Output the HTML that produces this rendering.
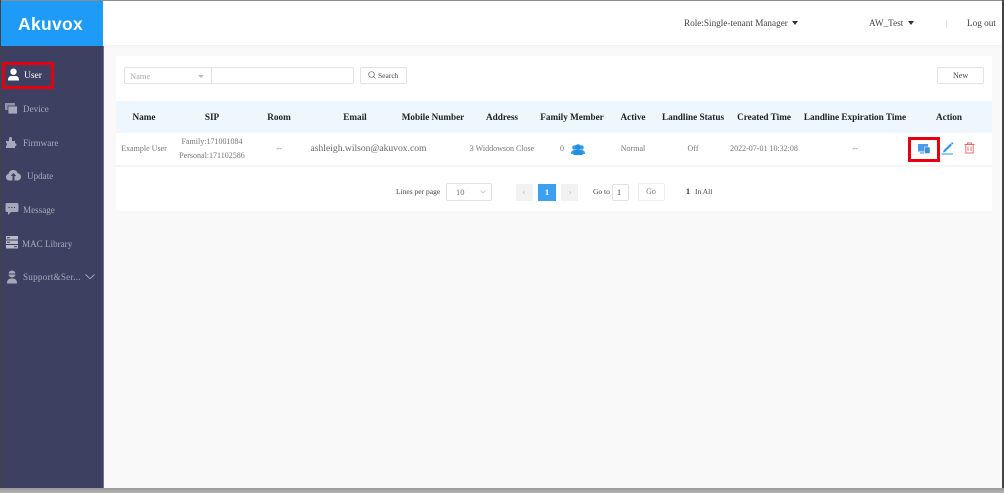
<!DOCTYPE html>
<html><head><meta charset="utf-8">
<style>
html,body{margin:0;padding:0;width:1004px;height:493px;overflow:hidden;background:#f9f9f9;}
body{position:relative;font-family:"Liberation Serif",serif;color:#555;}
div,span,svg{position:absolute;}
#w{left:0;top:0;width:1004px;height:493px;filter:blur(.3px);}
.t{white-space:nowrap;line-height:12px;}
.c{transform:translateX(-50%);}
.h{top:111px;font-size:9.200px;font-weight:bold;color:#222;}
.r{font-size:8px;color:#777;}
.m{font-size:9.100px;color:#a9abbd;}
.b{background:#fff;border:1px solid #e2e2e2;border-radius:2px;box-sizing:border-box;}
</style></head><body><div id="w">
<div style="left:104px;top:0;width:900px;height:45px;background:#fff;box-shadow:0 1px 3px #eee"></div>
<div style="left:1px;top:0;width:102px;height:46px;background:#1e9bf6"></div>
<div style="left:1px;top:46px;width:102px;height:442px;background:#3d4060"></div>
<div style="left:103px;top:46px;width:1px;height:442px;background:#6d7196"></div>
<div class="t" style="left:18px;top:15px;font:bold 17.500px/18px 'Liberation Sans',sans-serif;color:#fff;letter-spacing:.3px">Akuvox</div>

<div style="left:2px;top:62px;width:52px;height:27px;border:3px solid #e5000f;box-sizing:border-box"></div>
<svg style="left:7px;top:68px" width="13" height="13" viewBox="0 0 13 13"><circle cx="6.500" cy="3.700" r="3.200" fill="#fff"/><path d="M1 12.500c0-3.500 1.500-4.500 3.500-4.500h4c2 0 3.500 1 3.500 4.500z" fill="#fff"/></svg>
<div class="t" style="left:24px;top:70px;font-size:9.500px;color:#fff">User</div>

<svg style="left:5px;top:103px" width="13" height="12" viewBox="0 0 13 12"><rect x="0" y="0" width="10" height="7" fill="#8f92a8"/><rect x="3" y="3" width="9.500" height="8" fill="#a5a7ba" stroke="#3d4060" stroke-width=".8"/></svg>
<div class="t m" style="left:23px;top:103px">Device</div>
<svg style="left:5px;top:136px" width="13" height="13" viewBox="0 0 13 13"><path d="M1 5h3V2.500a1.500 1.500 0 0 1 3 0V5h3v2.200a1.500 1.500 0 0 1 0 3V12H1v-2.500a1.400 1.400 0 0 0 1-1.300A1.400 1.400 0 0 0 1 7z" fill="#a5a7ba"/></svg>
<div class="t m" style="left:23px;top:137px">Firmware</div>
<svg style="left:5px;top:168px" width="17" height="14" viewBox="0 0 17 14"><path d="M4 12.500a3.400 3.400 0 0 1-.5-6.700 4.800 4.800 0 0 1 9.200-.6 3.700 3.700 0 0 1 .3 7.300z" fill="#a9abbd"/><path d="M8.500 5l-2.800 3h1.800v4.500h2V8h1.800z" fill="#3d4060"/></svg>
<div class="t m" style="left:27px;top:170px">Update</div>
<svg style="left:5px;top:202px" width="14" height="14" viewBox="0 0 14 14"><path d="M2 1h10a1.500 1.500 0 0 1 1.500 1.500v6A1.500 1.500 0 0 1 12 10H6l-3 3v-3H2A1.500 1.500 0 0 1 .5 8.500v-6A1.500 1.500 0 0 1 2 1z" fill="#a5a7ba"/><path d="M3.500 5.500h1.200m1.500 0h1.200m1.500 0h1.200" stroke="#3d4060"/></svg>
<div class="t m" style="left:23px;top:204px">Message</div>
<svg style="left:6px;top:236px" width="12" height="13" viewBox="0 0 12 13"><rect width="12" height="3.500" fill="#b8bac8"/><rect y="4.500" width="12" height="3.500" fill="#b8bac8"/><rect y="9" width="12" height="3.500" fill="#b8bac8"/><path d="M1 1.700h3M1 6.200h3M8 10.700h3" stroke="#3d4060"/></svg>
<div class="t m" style="left:22px;top:238px">MAC Library</div>
<svg style="left:6px;top:270px" width="12" height="14" viewBox="0 0 12 14"><circle cx="6" cy="4" r="3.500" fill="#a5a7ba"/><path d="M2 4h8" stroke="#3d4060"/><path d="M1 13.500c0-3.500 1.500-5 5-5s5 1.500 5 5z" fill="#a5a7ba"/></svg>
<div class="t m" style="left:23px;top:271px;letter-spacing:.25px">Support&amp;Ser...</div>
<svg style="left:85px;top:274px" width="10" height="6" viewBox="0 0 10 6"><path d="M.5.500L5 4.800 9.500.500" fill="none" stroke="#a9abbd" stroke-width=".9"/></svg>

<div class="t" style="left:684px;top:17px;font-size:9.200px;color:#444">Role:Single-tenant Manager</div>
<svg style="left:792px;top:21px" width="6" height="4"><path d="M0 0h6L3 4z" fill="#333"/></svg>
<div class="t" style="left:869px;top:17px;font-size:9.200px;color:#444">AW_Test</div>
<svg style="left:908px;top:21px" width="6" height="4"><path d="M0 0h6L3 4z" fill="#333"/></svg>
<div style="left:946px;top:20px;width:1px;height:8px;background:#e6e6e6"></div>
<div class="t" style="left:967px;top:17px;font-size:9.200px;color:#444">Log out</div>

<div style="left:116px;top:56px;width:876px;height:155px;background:#fff"></div>
<div class="b" style="left:124px;top:67px;width:88px;height:17px;border-radius:2px 0 0 2px"></div>
<div class="t" style="left:130px;top:70px;font-size:8.500px;color:#aaa">Name</div>
<svg style="left:198px;top:75px" width="6" height="3"><path d="M0 0h6L3 3z" fill="#bbb"/></svg>
<div class="b" style="left:211px;top:67px;width:143px;height:17px"></div>
<div class="b" style="left:360px;top:67px;width:47px;height:17px"></div>
<svg style="left:368px;top:71px" width="8" height="8" viewBox="0 0 8 8"><circle cx="3.500" cy="3.500" r="2.800" fill="none" stroke="#666" stroke-width=".7"/><path d="M5.500 5.500L7.500 7.500" stroke="#666" stroke-width=".7"/></svg>
<div class="t" style="left:378px;top:70px;font-size:7.500px;color:#444">Search</div>
<div class="b" style="left:937px;top:67px;width:47px;height:17px"></div>
<div class="t" style="left:953px;top:70px;font-size:8px;color:#444">New</div>

<div style="left:116px;top:101px;width:876px;height:32px;background:#edf7fd"></div>
<div style="left:116px;top:165px;width:876px;height:2px;background:#f4f4f4"></div>
<div class="t h c" style="left:144px">Name</div>
<div class="t h c" style="left:212px">SIP</div>
<div class="t h c" style="left:279px">Room</div>
<div class="t h c" style="left:355px">Email</div>
<div class="t h c" style="left:433px">Mobile Number</div>
<div class="t h c" style="left:502px">Address</div>
<div class="t h c" style="left:572px">Family Member</div>
<div class="t h c" style="left:633px">Active</div>
<div class="t h c" style="left:693px">Landline Status</div>
<div class="t h c" style="left:764px">Created Time</div>
<div class="t h c" style="left:855px">Landline Expiration Time</div>
<div class="t h c" style="left:949px">Action</div>

<div class="t r c" style="left:144px;top:143px">Example User</div>
<div class="t r c" style="left:212px;top:136px">Family:171001084</div>
<div class="t r c" style="left:212px;top:150px">Personal:171102586</div>
<div class="t r c" style="left:279px;top:143px">--</div>
<div class="t c" style="left:368.500px;top:143px;font-size:9.600px;color:#666">ashleigh.wilson@akuvox.com</div>
<div class="t r c" style="left:502px;top:143px">3 Widdowson Close</div>
<div class="t r c" style="left:562px;top:143px">0</div>
<svg style="left:571px;top:144px" width="14" height="11" viewBox="0 0 14 11"><circle cx="3.500" cy="3.500" r="2.300" fill="#3a9be8"/><circle cx="10.500" cy="3.500" r="2.300" fill="#3a9be8"/><path d="M0 10c0-3 1.500-4 3.500-4s3.500 1 3.500 4zM7 10c0-3 1.500-4 3.500-4s3.500 1 3.500 4z" fill="#3a9be8"/><circle cx="7" cy="3" r="2.800" fill="#1f8fe6"/><path d="M2.500 11c0-4 2-5.500 4.500-5.500s4.500 1.500 4.500 5.500z" fill="#1f8fe6"/></svg>
<div class="t r c" style="left:633px;top:143px">Normal</div>
<div class="t r c" style="left:693px;top:143px">Off</div>
<div class="t r c" style="left:764px;top:143px">2022-07-01 10:32:08</div>
<div class="t r c" style="left:855px;top:143px">--</div>

<div style="left:908px;top:137px;width:32px;height:25px;border:3px solid #e5000f;box-sizing:border-box"></div>
<svg style="left:918px;top:144px" width="12" height="10" viewBox="0 0 12 10"><rect x="0" y="0" width="10" height="7.500" fill="#4a9cec"/><rect x="6.500" y="3" width="5.500" height="6.500" fill="#3f8ddc" stroke="#fff" stroke-width=".5"/><path d="M2 9h4" stroke="#4a9cec" stroke-width="1.200"/></svg>
<svg style="left:941px;top:141px" width="13" height="14" viewBox="0 0 13 14"><path d="M2.500 9.500L9.500 2.500l1.500 1.500-7 7-2 .5z" fill="#2a97e8"/><path d="M10 2l1-1 1.500 1.500-1 1z" fill="#2a97e8"/><path d="M.5 13h11.500" stroke="#2a97e8" stroke-width="1"/></svg>
<svg style="left:964px;top:142px" width="11" height="12" viewBox="0 0 11 12"><path d="M.5 2.500h10M3.500 2.500V1h4v1.500M1.800 2.500V11h7.400V2.500M4 4.500v4.500M7 4.500v4.500" fill="none" stroke="#ea6a6a" stroke-width=".9"/></svg>

<div class="t" style="left:396px;top:186px;font-size:7.500px;color:#444">Lines per page</div>
<div class="b" style="left:446px;top:183px;width:46px;height:18px"></div>
<div class="t" style="left:456px;top:186px;font-size:8.500px;color:#777">10</div>
<svg style="left:480px;top:190px" width="6" height="4" viewBox="0 0 6 4"><path d="M.5.500L3 3 5.500.500" fill="none" stroke="#bbb" stroke-width=".7"/></svg>
<div style="left:516px;top:184px;width:17px;height:17px;background:#f2f2f2"></div>
<div class="t c" style="left:524px;top:186px;font-size:9px;color:#bbb">‹</div>
<div style="left:538px;top:184px;width:18px;height:17px;background:#3c9ff0"></div>
<div class="t c" style="left:547px;top:186px;font-size:8.500px;font-weight:bold;color:#fff">1</div>
<div style="left:561px;top:184px;width:17px;height:17px;background:#f2f2f2"></div>
<div class="t c" style="left:570px;top:186px;font-size:9px;color:#bbb">›</div>
<div class="t" style="left:593px;top:186px;font-size:7.500px;color:#444">Go to</div>
<div class="b" style="left:612px;top:184px;width:17px;height:17px"></div>
<div class="t c" style="left:619px;top:186px;font-size:8.500px;color:#444">1</div>
<div class="b" style="left:638px;top:183px;width:27px;height:18px;border-color:#eee"></div>
<div class="t c" style="left:651px;top:186px;font-size:8px;color:#777">Go</div>
<div class="t" style="left:686px;top:186px;font-size:8px;font-weight:bold;color:#333">1</div>
<div class="t" style="left:695px;top:186px;font-size:7.500px;color:#444">In All</div>

<div style="left:0;top:0;width:1004px;height:1px;background:#8c8c8c"></div>
<div style="left:0;top:0;width:1px;height:488px;background:#444"></div>
<div style="left:1002px;top:0;width:2px;height:488px;background:#444"></div>
<div style="left:0;top:488px;width:1004px;height:5px;background:linear-gradient(#999,#b5b5b5)"></div>
</div></body></html>
